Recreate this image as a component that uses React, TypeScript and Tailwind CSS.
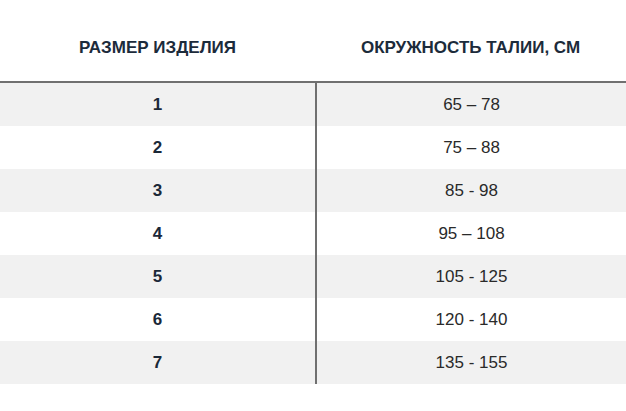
import React from 'react';

const rows = [
  { size: '1', waist: '65 – 78' },
  { size: '2', waist: '75 – 88' },
  { size: '3', waist: '85 - 98' },
  { size: '4', waist: '95 – 108' },
  { size: '5', waist: '105 - 125' },
  { size: '6', waist: '120 - 140' },
  { size: '7', waist: '135 - 155' },
];

const App: React.FC = () => {
  return (
    <div className="w-[626px] h-[411px] bg-white font-['Liberation_Sans',Arial,sans-serif]">
      <div className="flex h-[83px] border-b-2 border-[#707070] text-[17px] font-bold text-[#1c2b3b]">
        <div className="w-[315px] flex items-center justify-center pt-[15px]">РАЗМЕР ИЗДЕЛИЯ</div>
        <div className="flex-1 flex items-center justify-center pt-[15px]">ОКРУЖНОСТЬ ТАЛИИ, СМ</div>
      </div>
      {rows.map((row, i) => (
        <div key={row.size} className={`flex h-[43px] ${i % 2 === 0 ? 'bg-[#f1f1f1]' : 'bg-white'}`}>
          <div className="w-[315px] flex items-center justify-center text-[17px] font-bold text-[#1a2838]">
            {row.size}
          </div>
          <div className="flex-1 flex items-center justify-center border-l-2 border-[#707070] text-[17px] text-[#2a2a2a]">
            {row.waist}
          </div>
        </div>
      ))}
    </div>
  );
};

export default App;
